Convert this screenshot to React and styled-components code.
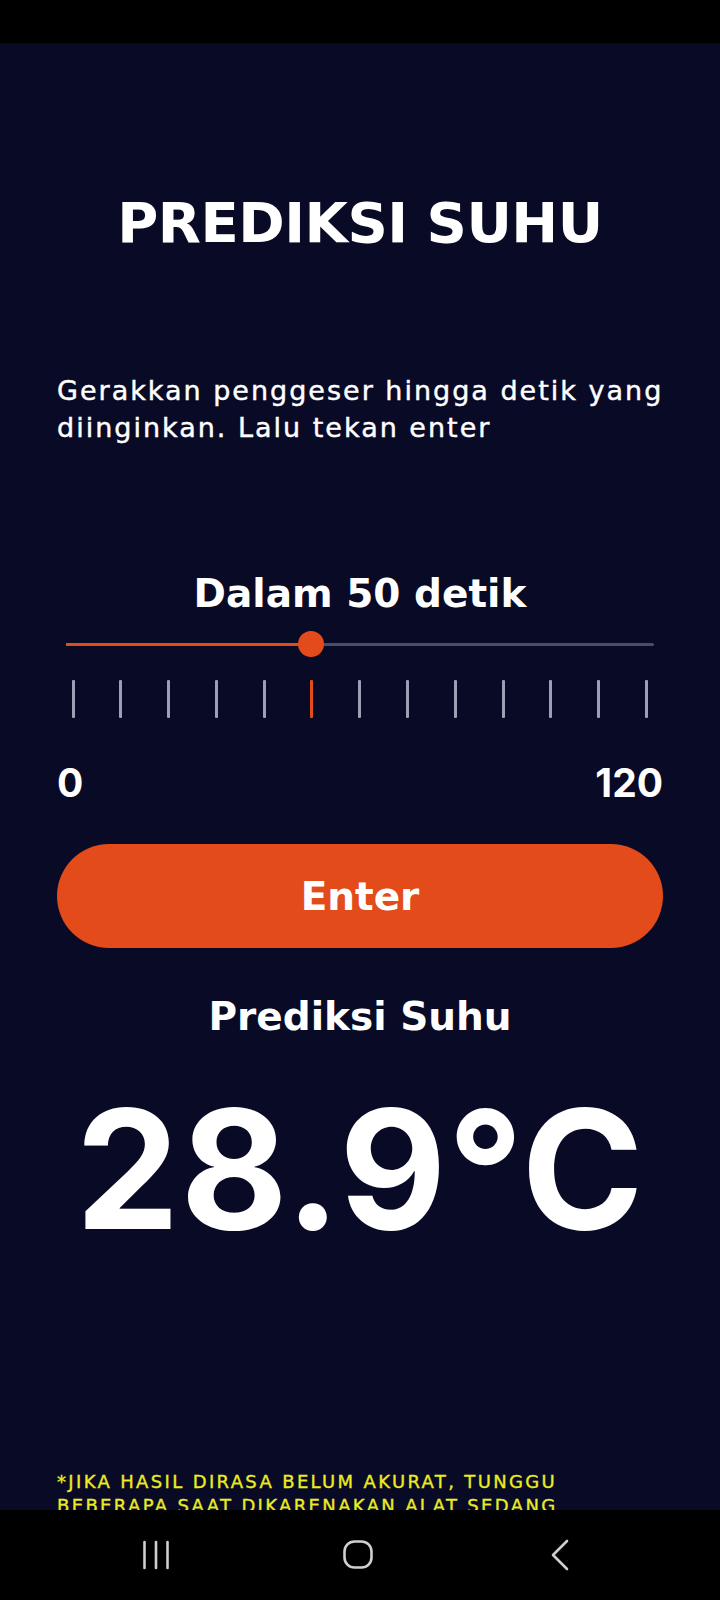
import React, { useState } from "react";
import styled, { createGlobalStyle } from "styled-components";

const GlobalStyle = createGlobalStyle`
  html, body {
    margin: 0;
    padding: 0;
    background: #000;
  }
  * {
    box-sizing: border-box;
  }
`;

const textFont = `"DejaVu Sans", "Liberation Sans", sans-serif`;
const numberFont = `"Inter", "Liberation Sans", sans-serif`;

const Phone = styled.div`
  width: 720px;
  height: 1600px;
  display: flex;
  flex-direction: column;
  background: #000;
  font-family: ${textFont};
  color: #fff;
`;

const StatusBar = styled.div`
  height: 43px;
  flex: none;
  background: #000;
`;

const Screen = styled.main`
  height: 1467px;
  flex: none;
  overflow: hidden;
  background: #080a26;
  padding: 0 57px;
`;

const Title = styled.h1`
  margin: 152px 0 0;
  font-size: 56px;
  line-height: 56px;
  font-weight: 700;
  letter-spacing: -0.5px;
  text-align: center;
`;

// medium weight look: DejaVu only ships book/bold, so thicken the book cut a little
const Intro = styled.p`
  margin: 121px 0 0;
  font-size: 27px;
  line-height: 37px;
  font-weight: 400;
  letter-spacing: 2px;
  white-space: nowrap;
  -webkit-text-stroke: 0.45px currentColor;
`;

const Heading = styled.h2`
  margin: ${(p) => p.$gap}px 0 0;
  font-size: 39px;
  line-height: 46px;
  font-weight: 700;
  text-align: center;
`;

const SliderWrap = styled.div`
  margin-top: 14px;
  padding: 0 9px;
`;

const Track = styled.div`
  position: relative;
  height: 26px;
  display: flex;
  align-items: center;
`;

const Rail = styled.div`
  width: 100%;
  height: 3px;
  border-radius: 2px;
  background: #4b4e63;
`;

const Fill = styled.div`
  position: absolute;
  left: 0;
  top: 11.5px;
  height: 3px;
  background: #e34c1a;
`;

const Thumb = styled.div`
  position: absolute;
  top: 0;
  width: 26px;
  height: 26px;
  margin-left: -13px;
  border-radius: 50%;
  background: #e34c1a;
`;

const Ticks = styled.div`
  margin-top: 23px;
  padding: 0 15px 0 14.5px;
  height: 38px;
  display: flex;
  justify-content: space-between;
`;

const Tick = styled.span`
  width: 3px;
  height: 100%;
  border-radius: 1px;
  background: ${(p) => (p.$active ? "#e34c1a" : "#9d9fb2")};
`;

const Range = styled.div`
  margin-top: 45px;
  display: flex;
  justify-content: space-between;
  font-family: ${numberFont};
  font-size: 39px;
  line-height: 40px;
  font-weight: 700;
`;

const EnterButton = styled.button`
  margin-top: 41px;
  width: 100%;
  height: 104px;
  display: flex;
  align-items: center;
  justify-content: center;
  border: none;
  border-radius: 52px;
  background: #e34c1a;
  color: #fff;
  font-family: ${textFont};
  font-size: 39px;
  font-weight: 700;
  cursor: pointer;
`;

const Temperature = styled.div`
  margin-top: 47px;
  font-family: ${numberFont};
  font-size: 165px;
  line-height: 165px;
  font-weight: 700;
  letter-spacing: 1px;
  text-align: center;
`;

const Note = styled.p`
  margin: 218px 0 0;
  font-size: 18px;
  line-height: 24px;
  font-weight: 400;
  color: #ecec22;
  letter-spacing: 2.35px;
  -webkit-text-stroke: 0.35px currentColor;
`;

const NavBar = styled.nav`
  height: 90px;
  flex: none;
  background: #000;
  display: grid;
  grid-template-columns: repeat(3, 202px);
  padding-left: 55px;
  align-items: center;
`;

const NavButton = styled.div`
  display: flex;
  justify-content: center;
  align-items: center;
  height: 30px;
  color: #cfcfcf;
`;

function Slider({ value, max }) {
  const pct = (value / max) * 100;
  return (
    <SliderWrap>
      <Track>
        <Rail />
        <Fill style={{ width: `${pct}%` }} />
        <Thumb style={{ left: `${pct}%` }} />
      </Track>
    </SliderWrap>
  );
}

export default function App() {
  const [seconds] = useState(50);
  const max = 120;
  const steps = 12;

  return (
    <Phone>
      <GlobalStyle />
      <StatusBar />
      <Screen>
        <Title>PREDIKSI SUHU</Title>
        <Intro>
          Gerakkan penggeser hingga detik yang
          <br />
          diinginkan. Lalu tekan enter
        </Intro>

        <Heading $gap={125}>Dalam {seconds} detik</Heading>
        <Slider value={seconds} max={max} />
        <Ticks>
          {Array.from({ length: steps + 1 }, (_, i) => (
            <Tick key={i} $active={i === Math.round((seconds / max) * steps)} />
          ))}
        </Ticks>
        <Range>
          <span>0</span>
          <span>{max}</span>
        </Range>

        <EnterButton>Enter</EnterButton>

        <Heading $gap={46}>Prediksi Suhu</Heading>
        <Temperature>28.9°C</Temperature>

        <Note>
          *JIKA HASIL DIRASA BELUM AKURAT, TUNGGU BEBERAPA SAAT DIKARENAKAN ALAT SEDANG MELAKUKAN PEMBARUAN DATA
        </Note>
      </Screen>
      <NavBar>
        <NavButton>
          <svg width="28" height="30" viewBox="0 0 28 30" fill="none" stroke="currentColor" strokeWidth="2.6" strokeLinecap="round">
            <line x1="2.5" y1="2" x2="2.5" y2="28" />
            <line x1="14" y1="2" x2="14" y2="28" />
            <line x1="25.5" y1="2" x2="25.5" y2="28" />
          </svg>
        </NavButton>
        <NavButton>
          <svg width="30" height="30" viewBox="0 0 30 30" fill="none" stroke="currentColor" strokeWidth="2.6">
            <rect x="1.5" y="1.5" width="27" height="26" rx="10" />
          </svg>
        </NavButton>
        <NavButton>
          <svg width="20" height="32" viewBox="0 0 20 32" fill="none" stroke="currentColor" strokeWidth="2.6" strokeLinecap="round" strokeLinejoin="round">
            <polyline points="17,2 3,16 17,30" />
          </svg>
        </NavButton>
      </NavBar>
    </Phone>
  );
}
